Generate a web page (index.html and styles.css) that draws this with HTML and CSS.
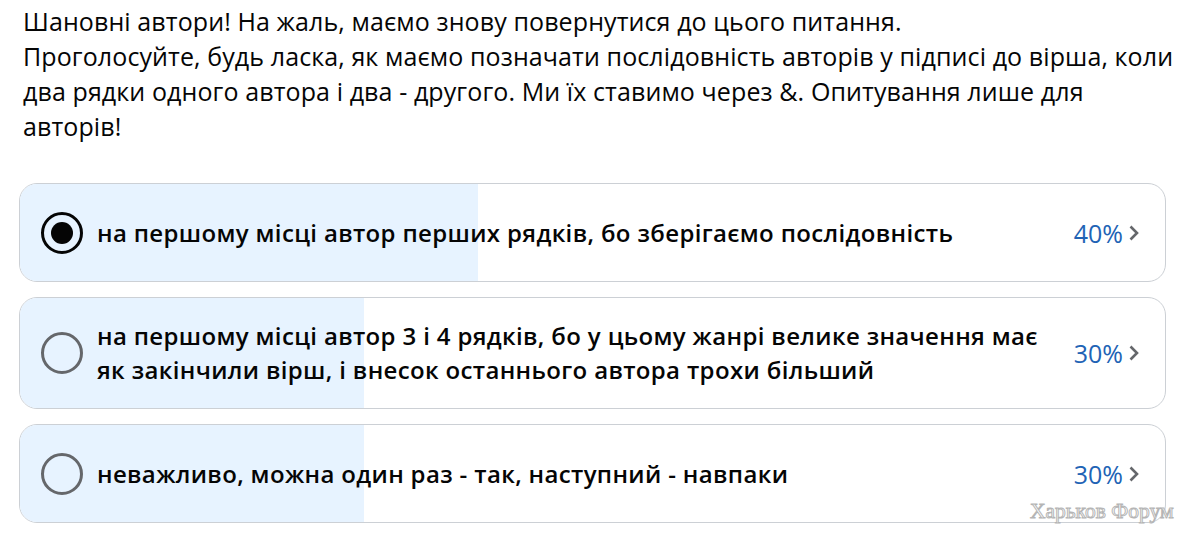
FILE: index.html
```html
<!DOCTYPE html>
<html lang="uk">
<head>
    <meta charset="utf-8">
    <title>Опитування</title>
    <link rel="stylesheet" href="styles.css">
</head>
<body>
<div id="post">
    <p class="question">Шановні автори! На жаль, маємо знову повернутися до цього питання.<br>Проголосуйте, будь ласка, як маємо позначати послідовність авторів у підписі до вірша, коли два рядки одного автора і два - другого. Ми їх ставимо через &amp;. Опитування лише для авторів!</p>

    <div class="poll">
        <div class="option">
            <div class="fill" style="width:40%"></div>
            <span class="radio checked"></span>
            <span class="label">на першому місці автор перших рядків, бо зберігаємо послідовність</span>
            <span class="pct">40%</span>
            <svg class="chev" viewBox="0 0 12 18"><path d="M2.5 2.5 L9 9 L2.5 15.5" /></svg>
        </div>
        <div class="option">
            <div class="fill" style="width:30%"></div>
            <span class="radio"></span>
            <span class="label">на першому місці автор 3 і 4 рядків, бо у цьому жанрі велике значення має як закінчили вірш, і внесок останнього автора трохи більший</span>
            <span class="pct">30%</span>
            <svg class="chev" viewBox="0 0 12 18"><path d="M2.5 2.5 L9 9 L2.5 15.5" /></svg>
        </div>
        <div class="option">
            <div class="fill" style="width:30%"></div>
            <span class="radio"></span>
            <span class="label">неважливо, можна один раз - так, наступний - навпаки</span>
            <span class="pct">30%</span>
            <svg class="chev" viewBox="0 0 12 18"><path d="M2.5 2.5 L9 9 L2.5 15.5" /></svg>
        </div>
    </div>
</div>
<div class="watermark">Харьков Форум</div>
</body>
</html>
```

FILE: styles.css
```css
body {
    margin:0;
    background:#fff;
    font-family:"Open Sans", "Noto Sans", sans-serif;
    color:#050505;
}
#post {
    padding:0 20px 0 19px;
}
.question {
    margin:0;
    padding:4px 0 0 4px;
    font-size:25px;
    letter-spacing:0.1px;
    line-height:35px;
    width:1160px;
}
.poll {
    display:flex;
    flex-direction:column;
    gap:15px;
    margin-top:39px;
}
.option {
    position:relative;
    display:flex;
    align-items:center;
    box-sizing:border-box;
    min-height:99px;
    padding:21px 24px 21px 21px;
    border:1px solid #ccd0d5;
    border-radius:18px;
    overflow:hidden;
}
.fill {
    position:absolute;
    left:0;
    top:0;
    bottom:0;
    background:#e7f3ff;
}
.radio {
    position:relative;
    flex:none;
    box-sizing:border-box;
    width:42px;
    height:42px;
    border:3px solid #65676b;
    border-radius:50%;
    margin-right:14px;
}
.radio.checked {
    border-color:#050505;
}
.radio.checked::after {
    content:"";
    position:absolute;
    left:7px;
    top:7px;
    width:22px;
    height:22px;
    border-radius:50%;
    background:#050505;
}
.label {
    position:relative;
    flex:1;
    font-size:24px;
    letter-spacing:0.35px;
    font-weight:600;
    line-height:34px;
    padding-right:28px;
}
.pct {
    position:relative;
    font-size:25px;
    color:#2163b5;
}
.chev {
    position:relative;
    flex:none;
    width:12px;
    height:18px;
    margin-left:5px;
    margin-right:1px;
    fill:none;
    stroke:#65676b;
    stroke-width:2.6;
}
.watermark {
    position:absolute;
    left:1030px;
    top:499px;
    white-space:nowrap;
    font-family:"Liberation Serif", serif;
    font-size:21.5px;
    color:#fff;
    -webkit-text-stroke:1px #b5b5b5;
}
```
